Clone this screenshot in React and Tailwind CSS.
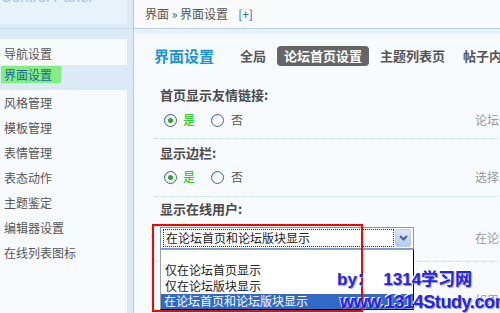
const menu = ['导航设置', '界面设置', '风格管理', '模板管理', '表情管理', '表态动作', '主题鉴定', '编辑器设置', '在线列表图标'];
const tabs = ['全局', '论坛首页设置', '主题列表页', '帖子内页'];

function Radio({ checked }) {
  return (
    <span className="w-[13px] h-[13px] shrink-0 rounded-full border border-[#3f6190] bg-linear-to-br from-[#cfd5dc] via-white to-white flex items-center justify-center">
      {checked && <span className="w-[5px] h-[5px] rounded-full bg-[#27a827]" />}
    </span>
  );
}

function YesNo() {
  return (
    <div className="flex items-center pl-[10px] text-[12px]">
      <Radio checked />
      <span className="ml-[6px] text-[#00c800]">是</span>
      <span className="ml-[16px]"><Radio /></span>
      <span className="ml-[7px] text-[#555]">否</span>
    </div>
  );
}

function Row({ children, desc, className }) {
  return (
    <div className={`flex items-center ${className}`}>
      <div className="w-[321px] shrink-0 flex items-center h-full">{children}</div>
      <span className="whitespace-nowrap text-[12px] text-[#999]">{desc}</span>
    </div>
  );
}

function Label({ children, className }) {
  return (
    <div className={`h-[20px] leading-[20px] pl-[6px] text-[13px] font-bold text-[#4a4a4a] ${className}`}>{children}</div>
  );
}

export default function App() {
  return (
    <div className="relative w-[500px] h-[313px] overflow-hidden flex font-['Noto_Sans_CJK_SC',sans-serif] text-[12px] text-[#555]">
      <aside className="w-[134px] shrink-0 bg-[#dbeaf6] border-r border-[#b3cbe0] flex flex-col">
        <div className="h-[29px] border-b border-[#c3d8e8]">
          <div className="w-[127px] h-[24px] bg-[#e7f2fb] overflow-hidden">
            <div className="mt-[-11px] pl-[1px] text-[15px] leading-[16px] text-[#a9c1d6] font-['Liberation_Sans',sans-serif]">Control Panel</div>
          </div>
        </div>
        <div className="pt-[10px] flex-1">
          <ul className="w-[127px] h-full bg-[#f8fbfe]">
            {menu.map((item, idx) =>
              idx === 1 ? (
                <li key={item} className="h-[25px] bg-[#dbeaf6] pt-[1px]">
                  <span className="block w-[60px] h-[17px] ml-[1px] pl-[3px] leading-[17px] bg-[#84ee84] text-[#1b6797]">{item}</span>
                </li>
              ) : (
                <li key={item} className={`${idx === 0 ? 'h-[26px] pt-[2px]' : 'h-[25px]'} leading-[25px] pl-[4px]`}>{item}</li>
              )
            )}
          </ul>
        </div>
      </aside>

      <main className="flex-1 bg-[#f8fbfe] flex flex-col">
        <div className="h-[29px] shrink-0 border-b border-[#b5cfe2] bg-[#f8fafc] pl-[11px] flex items-center text-[12px] text-[#555]">
          界面 » 界面设置
          <span className="ml-[10px] text-[#1d5fae]">[+]</span>
        </div>
        <div className="h-[5px] shrink-0 bg-[#e8f2fa]" />

        <div className="pl-[20px] pt-[12px]">
          <div className="h-[20px] flex items-center whitespace-nowrap">
            <span className="shrink-0 text-[15px] leading-[20px] font-bold text-[#1b93d1]">界面设置</span>
            <div className="ml-[19px] flex gap-[4px] text-[13px] font-bold text-[#555]">
              {tabs.map((tab, idx) => (
                <span key={tab} className={`shrink-0 h-[20px] leading-[20px] px-[7px] rounded-[4px] ${idx === 1 ? 'bg-[#666] text-white' : ''}`}>{tab}</span>
              ))}
            </div>
          </div>

          <Label className="mt-[19px]">首页显示友情链接:</Label>
          <Row className="mt-[5px] h-[20px]" desc="论坛首页显示友情链接">
            <YesNo />
          </Row>
          <div className="mt-[8px] border-b border-dotted border-[#c6dcee]" />

          <Label className="mt-[4px]">显示边栏:</Label>
          <Row className="mt-[4px] h-[20px]" desc="选择是否显示边栏">
            <YesNo />
          </Row>
          <div className="mt-[9px] border-b border-dotted border-[#c6dcee]" />

          <Label className="mt-[2px]">显示在线用户:</Label>
          <Row className="mt-[8px] h-[22px]" desc="在论坛首页和论坛版块显示在线用户列表">
            <div className="pl-[6px]">
              <div className="relative w-[254px] h-[22px] border border-[#7f9db9] bg-white flex px-[2px] py-[1px]">
                <div className="flex-1 border border-dotted border-[#333] pl-[2px] text-[12px] leading-[16px] text-[#222]">在论坛首页和论坛版块显示</div>
                <div className="w-[16px] ml-[1px] rounded-[2px] border border-[#b7cbef] bg-linear-to-b from-[#dce7fb] to-[#b6c9f0] flex items-center justify-center">
                  <svg width="9" height="6" viewBox="0 0 9 6">
                    <path d="M1 1 L4.5 4.5 L8 1" fill="none" stroke="#4d6185" strokeWidth="2" />
                  </svg>
                </div>
                <div className="absolute left-[-1px] top-[21px] z-10 w-[254px] h-[61px] overflow-hidden bg-white border border-[#a0a0a0] border-r-black border-b-black pt-[12px] text-[12px] text-[#222]">
                  <div className="h-[16px] leading-[16px] pl-[4px]">仅在论坛首页显示</div>
                  <div className="h-[16px] leading-[16px] pl-[4px]">仅在论坛版块显示</div>
                  <div className="h-[16px] leading-[14px] pl-[3px] bg-[#316ac5] text-white">在论坛首页和论坛版块显示</div>
                </div>
              </div>
            </div>
          </Row>
          <div className="mt-[12px] border-b border-dotted border-[#c6dcee]" />

          <Label className="mt-[3px]">最多显示在线人数:</Label>
          <Row className="mt-[5px] h-[20px]" desc="如果设置为 0 则不限制">
            <div className="pl-[10px]">
              <div className="w-[200px] h-[20px] border border-[#7f9db9] bg-white" />
            </div>
          </Row>
        </div>
      </main>

      <div className="absolute left-[152px] top-[224px] w-[211px] h-[88px] border-2 border-[#ff0000] z-20" />

      <div className="absolute left-[337px] top-[269px] z-30 font-['Liberation_Sans','Noto_Sans_CJK_SC',sans-serif] font-bold leading-[22px] text-[#2424ee] whitespace-nowrap [text-shadow:1px_1px_1px_#9a9a9a,-1px_-1px_0_#fff]">
        <div className="text-[17px]">by：&nbsp;&nbsp;1314学习网</div>
        <div className="pl-[3px] text-[18px] tracking-[-0.4px]">www.1314Study.com</div>
      </div>
    </div>
  );
}
